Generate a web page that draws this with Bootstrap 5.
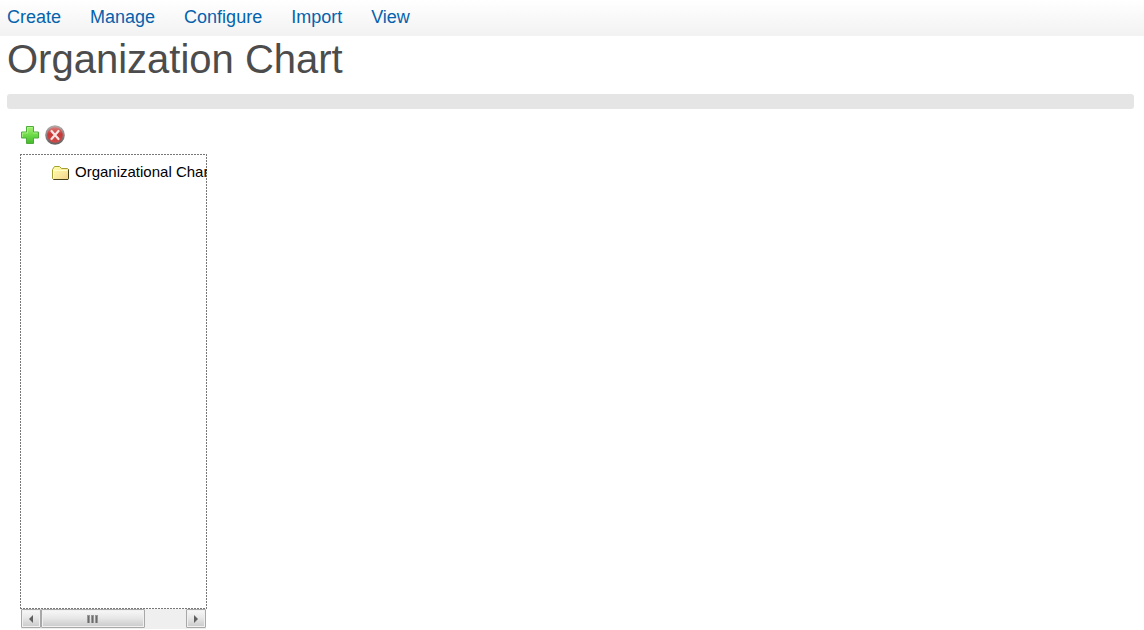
<!DOCTYPE html>
<html lang="en">
<head>
<meta charset="utf-8">
<meta name="viewport" content="width=device-width, initial-scale=1">
<title>Organization Chart</title>
<link href="https://cdn.jsdelivr.net/npm/bootstrap@5.3.0/dist/css/bootstrap.min.css" rel="stylesheet">
<style>
body { font-family: "Liberation Sans", Arial, sans-serif; color: #000; background: #fff; }
.menu-bar { background: linear-gradient(#fff, #f2f2f2); height: 36px; padding: 0 7px; gap: 29px; }
.menu-bar a { color: #0562ad; font-size: 18px; line-height: 34px; padding: 0; }
.page-title { color: #4c4c4c; font-size: 40px; line-height: 46px; margin: 0; padding: 0 7px; }
.divider-bar { height: 15px; margin: 12px 10px 0 7px; background: #e5e5e5; border-radius: 3px; }
.org-panel { width: 187px; margin: 16px 0 1px 20px; }
.tool-row { gap: 5px; height: 29px; }
.tool-row button { width: 20px; height: 20px; }
.tree-box {
  height: 455px; padding: 9px 0 0 32px; white-space: nowrap;
  background:
    repeating-linear-gradient(90deg, #777 0 2px, transparent 2px 3px) top / 100% 1px no-repeat,
    repeating-linear-gradient(90deg, #777 0 2px, transparent 2px 3px) bottom / 100% 1px no-repeat,
    repeating-linear-gradient(#777 0 2px, transparent 2px 3px) left / 1px 100% no-repeat,
    repeating-linear-gradient(#777 0 2px, transparent 2px 3px) right / 1px 100% no-repeat;
}
.tree-box a { color: #000; font-size: 15px; line-height: 18px; gap: 5px; }
.tree-box svg { margin-top: 2px; }
.scroll-track { height: 20px; margin: 0 1px; background: #efefef; }
.scroll-track button {
  padding: 0; border: 1px solid #a8a8a8; border-radius: 1px; height: 19px;
  background: linear-gradient(#f8f8f8, #e8e8e8 45%, #c9c9cb); box-shadow: inset 0 0 0 1px #f0f0f0;
}
.scroll-arrow { width: 20px; }
.scroll-thumb { width: 104px; }
</style>
</head>
<body>
<nav class="menu-bar nav flex-nowrap" aria-label="Main">
  <a class="nav-link" href="#">Create</a>
  <a class="nav-link" href="#">Manage</a>
  <a class="nav-link" href="#">Configure</a>
  <a class="nav-link" href="#">Import</a>
  <a class="nav-link" href="#">View</a>
</nav>
<main>
  <h1 class="page-title fw-normal">Organization Chart</h1>
  <div class="divider-bar"></div>
  <section class="org-panel">
    <div class="tool-row d-flex">
      <button type="button" class="btn p-0 border-0 d-flex" aria-label="Add">
        <svg width="20" height="20" viewBox="0 0 20 20" aria-hidden="true">
          <defs><linearGradient id="green" x2="0" y2="1"><stop stop-color="#a2f071"/><stop offset=".5" stop-color="#6ddb48"/><stop offset="1" stop-color="#45b92c"/></linearGradient></defs>
          <path d="M6.500 1.500h7v5.500h5v6h-5v5.500h-7v-5.500h-5v-6h5z" fill="url(#green)" stroke="#4fac3c" stroke-linejoin="round"/>
          <path d="M7.500 8V2.500h5M2.500 12V8h5M13 8h4.500" fill="none" stroke="#c0f79c" stroke-opacity=".6"/>
        </svg>
      </button>
      <button type="button" class="btn p-0 border-0 d-flex" aria-label="Delete">
        <svg width="20" height="20" viewBox="0 0 20 20" aria-hidden="true">
          <defs>
            <linearGradient id="rim" x2="0" y2="1"><stop stop-color="#b5abab"/><stop offset="1" stop-color="#625e5e"/></linearGradient>
            <linearGradient id="red" x2="0" y2="1"><stop stop-color="#dc7a78"/><stop offset=".45" stop-color="#c93737"/><stop offset="1" stop-color="#cf4b4b"/></linearGradient>
          </defs>
          <circle cx="10" cy="10" r="9.800" fill="url(#rim)"/>
          <circle cx="10" cy="10" r="7.800" fill="url(#red)"/>
          <path d="M6.500 6 13.500 14M13.500 6 6.500 14" stroke="#f7e5e5" stroke-width="2.200" stroke-linecap="round"/>
        </svg>
      </button>
    </div>
    <div class="tree-box overflow-hidden">
      <a href="#" class="d-flex text-decoration-none">
        <svg class="flex-shrink-0" width="18" height="16" viewBox="0 0 18 16" aria-hidden="true">
          <defs><linearGradient id="folder" x2="1" y2="1"><stop stop-color="#ffffa8"/><stop offset=".6" stop-color="#f9e79c"/><stop offset="1" stop-color="#f4cf86"/></linearGradient></defs>
          <path d="M.5 4.500 2.500 1.500h5l2 2h6l1 1v9l-1 1h-14l-1-1z" fill="url(#folder)" stroke="#a3a12b"/>
          <path d="M1.500 13V5.500h14" fill="none" stroke="#ffffc8"/>
          <path d="M1.500 14.500h14.500l.5-1v-9" fill="none" stroke="#45421b"/>
        </svg>
        <span>Organizational Chart</span>
      </a>
    </div>
    <div class="scroll-track d-flex">
      <button type="button" class="scroll-arrow d-flex align-items-center justify-content-center" aria-label="Scroll left">
        <svg width="6" height="8" viewBox="0 0 6 8" aria-hidden="true"><path d="M5 0v8L1 4z" fill="#606060"/></svg>
      </button>
      <button type="button" class="scroll-thumb d-flex align-items-center justify-content-center" aria-label="Scroll position">
        <svg width="12" height="8" viewBox="0 0 12 8" aria-hidden="true"><path d="M0 0h3v8H0zM4 0h3v8H4zM8 0h3v8H8z" fill="#999"/><path d="M1 1h1v7H1zM5 1h1v7H5zM9 1h1v7H9z" fill="#6c6c6c"/></svg>
      </button>
      <button type="button" class="scroll-arrow d-flex align-items-center justify-content-center ms-auto" aria-label="Scroll right">
        <svg width="6" height="8" viewBox="0 0 6 8" aria-hidden="true"><path d="M1 0v8l4-4z" fill="#606060"/></svg>
      </button>
    </div>
  </section>
</main>
<script src="https://cdn.jsdelivr.net/npm/bootstrap@5.3.0/dist/js/bootstrap.bundle.min.js"></script>
</body>
</html>
